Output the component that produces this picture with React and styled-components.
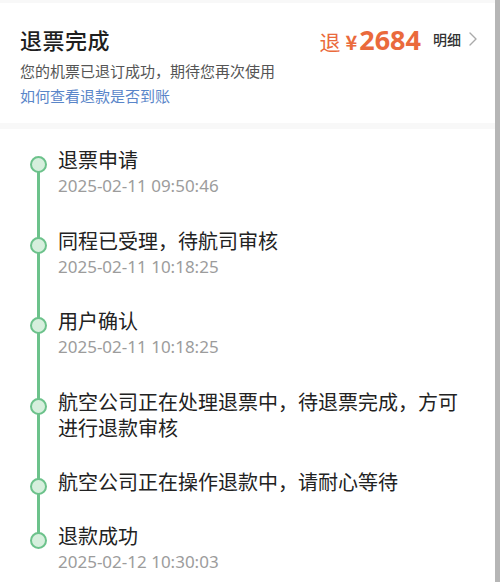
import React from 'react'
import styled, { createGlobalStyle } from 'styled-components'

const Global = createGlobalStyle`
  html, body { margin: 0; padding: 0; background: #f6f6f6; }
  body { font-family: "Noto Sans CJK SC", "Noto Sans", sans-serif; }
`

const steps = [
  { title: '退票申请', time: '2025-02-11 09:50:46' },
  { title: '同程已受理，待航司审核', time: '2025-02-11 10:18:25' },
  { title: '用户确认', time: '2025-02-11 10:18:25' },
  { title: '航空公司正在处理退票中，待退票完成，方可进行退款审核' },
  { title: '航空公司正在操作退款中，请耐心等待' },
  { title: '退款成功', time: '2025-02-12 10:30:03' },
]

export default function App() {
  return (
    <Page>
      <Global />
      <Main>
        <Header>
          <TopRow>
            <Title>退票完成</Title>
            <Amount>
              <span className="tui">退</span>
              <span className="yen">¥</span>
              <span className="num">2684</span>
            </Amount>
            <Detail>明细</Detail>
            <Chevron viewBox="0 0 10 16">
              <path d="M2 2 L8 8 L2 14" fill="none" stroke="#aaa" strokeWidth="1.4" strokeLinecap="round" strokeLinejoin="round" />
            </Chevron>
          </TopRow>
          <Sub>您的机票已退订成功，期待您再次使用</Sub>
          <Link>如何查看退款是否到账</Link>
        </Header>
        <Timeline>
          <Steps>
            <Rail />
            {steps.map((s, i) => (
              <Step key={i}>
                <Dot />
                <StepTitle>{s.title}</StepTitle>
                {s.time && <StepTime>{s.time}</StepTime>}
              </Step>
            ))}
          </Steps>
        </Timeline>
      </Main>
      <Edge />
    </Page>
  )
}

const Page = styled.div`
  display: flex;
  width: 500px;
  height: 582px;
  overflow: hidden;
`

const Main = styled.div`
  flex: 1;
  display: flex;
  flex-direction: column;
  gap: 6px;
  padding-top: 3px;
  background: #f8f8f8;
`

const Edge = styled.div`
  width: 5px;
  background: #b6b6b6;
`

const Header = styled.div`
  background: #fff;
  padding: 21px 17px 14px 20px;
`

const TopRow = styled.div`
  display: flex;
  align-items: center;
  height: 30px;
`

const Title = styled.div`
  flex: 1;
  font-size: 22px;
  font-weight: 500;
  color: #1f1f1f;
  letter-spacing: 0.5px;
`

const Amount = styled.div`
  display: flex;
  align-items: baseline;
  color: #ea6a3c;
  .tui { font-size: 21px; }
  .yen { font-size: 20px; font-weight: 700; margin: 0 2px 0 5px; }
  .num { font-size: 27px; font-weight: 700; font-family: "Noto Sans", sans-serif; }
`

const Detail = styled.div`
  margin-left: 12px;
  font-size: 14px;
  color: #333;
  font-weight: 500;
`

const Chevron = styled.svg`
  width: 10px;
  height: 16px;
  margin-left: 7px;
`

const Sub = styled.div`
  margin-top: 5px;
  font-size: 15px;
  line-height: 24px;
  color: #555;
`

const Link = styled.div`
  font-size: 15px;
  line-height: 26px;
  color: #5a86c9;
`

const Timeline = styled.div`
  flex: 1;
  background: #fff;
  padding: 18px 20px 0 58px;
`

const Steps = styled.div`
  position: relative;
`

const Rail = styled.div`
  position: absolute;
  left: -21px;
  top: 17px;
  bottom: 64px;
  width: 3px;
  background: #6cc28b;
`

const Step = styled.div`
  position: relative;
  padding-bottom: 28px;
`

const Dot = styled.div`
  position: absolute;
  left: -28px;
  top: 9px;
  width: 13px;
  height: 13px;
  border-radius: 50%;
  border: 2.5px solid #6cc28b;
  background: #d6efdd;
`

const StepTitle = styled.div`
  font-size: 20px;
  line-height: 26px;
  color: #222;
`

const StepTime = styled.div`
  font-size: 17px;
  line-height: 26.5px;
  color: #9c9c9c;
  font-family: "Noto Sans", sans-serif;
`
